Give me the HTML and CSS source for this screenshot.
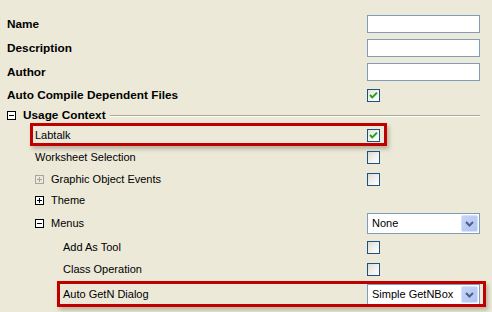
FILE: index.html
```html
<!DOCTYPE html>
<html>
<head>
<meta charset="utf-8">
<link rel="stylesheet" href="styles.css">
</head>
<body>
<div class="page">
  <div class="grid">
    <div class="label bold">Name</div>
    <div class="value"><div class="textbox"></div></div>

    <div class="label bold">Description</div>
    <div class="value"><div class="textbox"></div></div>

    <div class="label bold">Author</div>
    <div class="value"><div class="textbox"></div></div>

    <div class="label bold">Auto Compile Dependent Files</div>
    <div class="value"><span class="check on"><svg viewBox="0 0 11 11" width="11" height="11"><path d="M2 5 L4.3 7.4 L9 2.6" fill="none" stroke="#21a121" stroke-width="2"/></svg></span></div>

    <div class="category">
      <span class="exp"><span class="h"></span></span>
      <span class="bold">Usage Context</span>
      <span class="rule"></span>
    </div>

    <div class="label lv1">Labtalk</div>
    <div class="value"><span class="check on"><svg viewBox="0 0 11 11" width="11" height="11"><path d="M2 5 L4.3 7.4 L9 2.6" fill="none" stroke="#21a121" stroke-width="2"/></svg></span></div>

    <div class="label lv1">Worksheet Selection</div>
    <div class="value"><span class="check"></span></div>

    <div class="label lv1"><span class="exp dim"><span class="h"></span><span class="v"></span></span>Graphic Object Events</div>
    <div class="value"><span class="check"></span></div>

    <div class="label lv1"><span class="exp"><span class="h"></span><span class="v"></span></span>Theme</div>
    <div class="value"></div>

    <div class="label lv1"><span class="exp"><span class="h"></span></span>Menus</div>
    <div class="value"><div class="combo"><span class="ctext">None</span><span class="cbtn"><svg viewBox="0 0 9 6" width="9" height="6"><path d="M1 1 L4.5 4.5 L8 1" fill="none" stroke="#4d6185" stroke-width="2"/></svg></span></div></div>

    <div class="label lv2">Add As Tool</div>
    <div class="value"><span class="check"></span></div>

    <div class="label lv2">Class Operation</div>
    <div class="value"><span class="check"></span></div>

    <div class="label lv2">Auto GetN Dialog</div>
    <div class="value"><div class="combo"><span class="ctext">Simple GetNBox</span><span class="cbtn"><svg viewBox="0 0 9 6" width="9" height="6"><path d="M1 1 L4.5 4.5 L8 1" fill="none" stroke="#4d6185" stroke-width="2"/></svg></span></div></div>
  </div>

  <div class="highlight hl-labtalk"></div>
  <div class="highlight hl-getn"></div>
</div>
</body>
</html>
```

FILE: styles.css
```css
html, body {
  margin: 0;
  padding: 0;
  background: #ece9d8;
}

body {
  font-family: "Liberation Sans", Arial, sans-serif;
  font-size: 11px;
  color: #000;
}

.page {
  position: relative;
  width: 492px;
  height: 312px;
  overflow: hidden;
}

.grid {
  display: grid;
  grid-template-columns: 1fr 113px;
  grid-template-rows: 24px 24px 24px 22px 19px 21px 23px 21px 21px 25px 23px 21px 29px;
  padding: 12px 12px 0 7px;
  align-items: center;
}

.label {
  display: flex;
  align-items: center;
  white-space: nowrap;
  line-height: 13px;
}

.bold {
  font-weight: bold;
  font-size: 11.8px;
}

.lv1 {
  padding-left: 28px;
}

.lv2 {
  padding-left: 56px;
}

.value {
  display: flex;
  align-items: center;
}

.textbox {
  width: 113px;
  height: 18px;
  box-sizing: border-box;
  border: 1px solid #7f9db9;
  background: #fff;
}

.check {
  width: 13px;
  height: 13px;
  box-sizing: border-box;
  border: 1px solid #1c5180;
  background: linear-gradient(135deg, #dcdcd7 0%, #f3f3ef 60%, #ffffff 100%);
  display: flex;
  align-items: center;
  justify-content: center;
}

.check.on {
  background: linear-gradient(135deg, #e6e6e0 0%, #f6f6f3 60%, #ffffff 100%);
}

.check svg {
  display: block;
}

.category {
  grid-column: 1 / -1;
  display: flex;
  align-items: center;
  line-height: 13px;
}

.exp {
  position: relative;
  width: 9px;
  height: 9px;
  box-sizing: border-box;
  border: 1px solid #000;
  background: #fff;
  margin-right: 7px;
  flex: none;
}

.exp.dim {
  border-color: #a5a5a0;
  background: #ece9d8;
}

.exp .h {
  position: absolute;
  left: 1px;
  top: 3px;
  width: 5px;
  height: 1px;
  background: #000;
}

.exp .v {
  position: absolute;
  left: 3px;
  top: 1px;
  width: 1px;
  height: 5px;
  background: #000;
}

.exp.dim .h,
.exp.dim .v {
  background: #a5a5a0;
}

.rule {
  flex: 1;
  height: 1px;
  margin-left: 4px;
  background: #aca899;
  border-bottom: 1px solid #fff;
  margin-top: 1px;
}

.combo {
  width: 113px;
  height: 21px;
  box-sizing: border-box;
  border: 1px solid #7f9db9;
  background: #fff;
  display: flex;
  align-items: center;
  padding: 1px;
}

.ctext {
  flex: 1;
  padding-left: 3px;
  line-height: 13px;
}

.cbtn {
  width: 17px;
  height: 17px;
  box-sizing: border-box;
  border: 1px solid #d6e1fb;
  border-radius: 2px;
  background: linear-gradient(135deg, #c6d4f7 0%, #b9cbf5 60%, #b0c4f3 100%);
  display: flex;
  align-items: center;
  justify-content: center;
}

.cbtn svg {
  display: block;
}

.highlight {
  position: absolute;
  box-sizing: border-box;
  border: 3px solid #c00000;
  box-shadow: 2px 3px 4px rgba(90, 80, 50, 0.35);
}

.hl-labtalk {
  left: 30px;
  top: 123px;
  width: 357px;
  height: 23px;
}

.hl-getn {
  left: 57px;
  top: 281px;
  width: 429px;
  height: 26px;
}
```
